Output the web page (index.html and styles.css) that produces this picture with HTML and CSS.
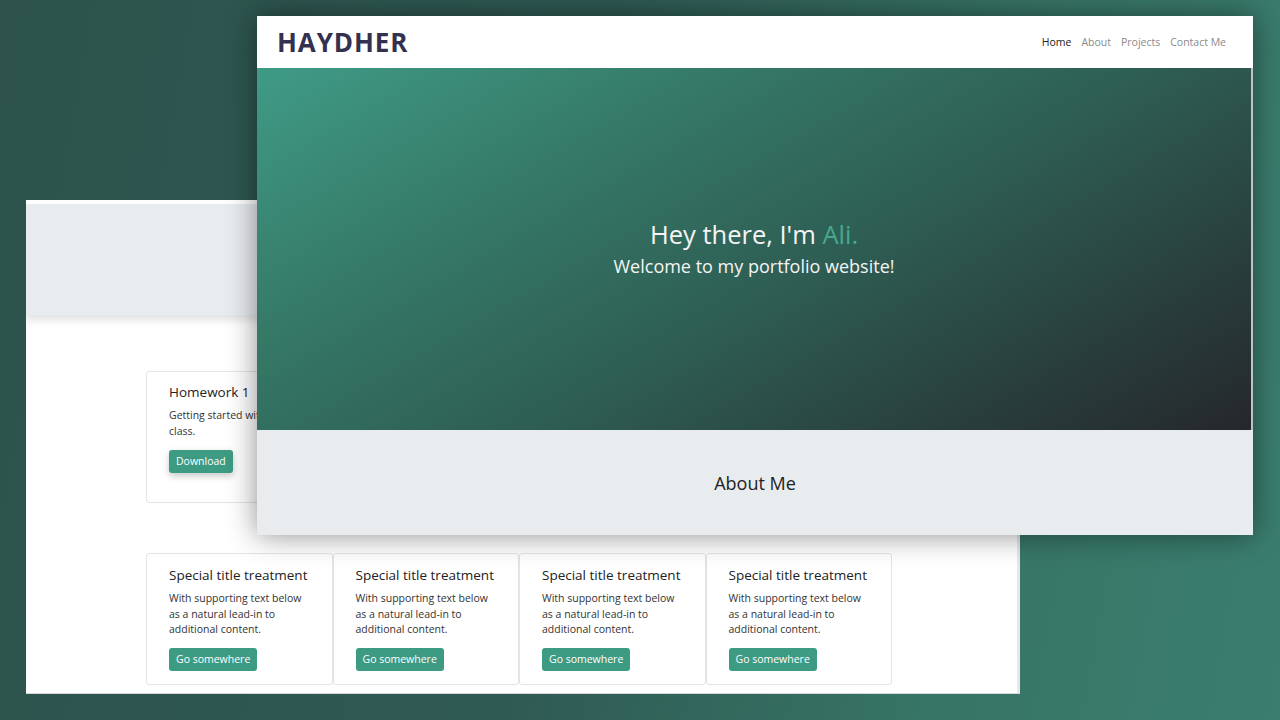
FILE: index.html
```html
<!DOCTYPE html>
<html lang="en">
<head>
<meta charset="utf-8">
<title>HAYDHER</title>
<link rel="stylesheet" href="styles.css">
</head>
<body>
<div class="desktop">
  <section class="window back">
    <div class="back-top"></div>
    <div class="jumbo"></div>
    <div class="back-content">
      <div class="hw-row">
        <div class="card hw-card">
          <h5 class="card-title">Homework 1</h5>
          <p class="card-text">Getting started with the basics of this<br>class.</p>
          <a class="btn btn-shadow">Download</a>
        </div>
      </div>
      <h3 class="section-head">Weekly Activity</h3>
      <div class="card-row">
        <div class="card">
          <h5 class="card-title">Special title treatment</h5>
          <p class="card-text">With supporting text below as a natural lead-in to additional content.</p>
          <a class="btn">Go somewhere</a>
        </div>
        <div class="card">
          <h5 class="card-title">Special title treatment</h5>
          <p class="card-text">With supporting text below as a natural lead-in to additional content.</p>
          <a class="btn">Go somewhere</a>
        </div>
        <div class="card">
          <h5 class="card-title">Special title treatment</h5>
          <p class="card-text">With supporting text below as a natural lead-in to additional content.</p>
          <a class="btn">Go somewhere</a>
        </div>
        <div class="card">
          <h5 class="card-title">Special title treatment</h5>
          <p class="card-text">With supporting text below as a natural lead-in to additional content.</p>
          <a class="btn">Go somewhere</a>
        </div>
      </div>
    </div>
    <div class="scrollbar"></div>
  </section>

  <section class="window front">
    <nav class="navbar">
      <div class="brand">HAYDHER</div>
      <ul class="nav">
        <li class="active">Home</li>
        <li>About</li>
        <li>Projects</li>
        <li>Contact Me</li>
      </ul>
    </nav>
    <header class="hero">
      <h1 class="hero-title">Hey there, I'm <span class="accent">Ali.</span></h1>
      <p class="hero-sub">Welcome to my portfolio website!</p>
    </header>
    <section class="about">
      <h2 class="about-title">About Me</h2>
    </section>
  </section>
</div>
</body>
</html>
```

FILE: styles.css
```css
* { box-sizing: border-box; }
html, body { margin: 0; padding: 0; }
body {
  width: 1280px;
  height: 720px;
  overflow: hidden;
  font-family: "Open Sans", "Noto Sans", sans-serif;
}
.desktop {
  position: relative;
  width: 1280px;
  height: 720px;
  background: linear-gradient(100deg, #2d524c 0%, #2f5a53 45%, #377566 75%, #3a7e6f 100%);
}
.window { position: absolute; overflow: hidden; }

/* back window */
.back {
  left: 26px;
  top: 200px;
  width: 994px;
  height: 494px;
  background: #fff;
  border-bottom: 1px solid #d8d8d8;
}
.back-top { height: 4px; background: #fff; }
.jumbo {
  height: 111px;
  background: #e9ecef;
  box-shadow: 0 5px 8px rgba(0,0,0,0.12);
  position: relative;
}
.back-content {
  padding: 56px 0 0 120px;
  display: flex;
  flex-direction: column;
}
.hw-row { display: flex; }
.card {
  border: 1px solid #e3e4e6;
  border-radius: 3px;
  background: #fff;
  padding: 12px 22px 13px 22px;
  display: flex;
  flex-direction: column;
  align-items: flex-start;
}
.hw-card { width: 300px; height: 132px; padding-top: 11px; }
.card-title {
  margin: 0 0 7px;
  font-weight: 400;
  font-size: 13.5px;
  color: #222;
  line-height: 18px;
}
.card-text {
  margin: 0 0 10px;
  font-size: 10.5px;
  line-height: 15.5px;
  color: #333;
}
.hw-card .card-text { margin-bottom: 11px; }
.btn {
  display: inline-block;
  background: #3d9a83;
  color: #fff;
  font-size: 10.5px;
  line-height: 23px;
  height: 23px;
  padding: 0 7px;
  border-radius: 3px;
}
.btn-shadow { box-shadow: 0 3px 7px rgba(0,0,0,0.22); }
.section-head {
  margin: 9px 0 0;
  text-align: center;
  width: 754px;
  font-weight: 400;
  font-size: 16px;
  line-height: 18px;
  color: #222;
  padding-left: 60px;
}
.card-row {
  display: flex;
  margin-top: 23px;
}
.card-row .card { width: 186.5px; height: 132px; }
.scrollbar {
  position: absolute;
  right: 0;
  top: 0;
  width: 3px;
  height: 100%;
  background: #e8e8e8;
}

/* front window */
.front {
  left: 257px;
  top: 16px;
  width: 996px;
  height: 519px;
  background: #fff;
  box-shadow: 0 0 28px rgba(0,0,0,0.45);
  display: flex;
  flex-direction: column;
}
.navbar {
  height: 52px;
  display: flex;
  align-items: center;
  justify-content: space-between;
  padding: 0 27px 0 20px;
  background: #fff;
}
.brand {
  font-weight: 700;
  font-size: 26px;
  letter-spacing: 0.9px;
  color: #33314f;
}
.nav {
  list-style: none;
  margin: 0;
  padding: 0;
  display: flex;
  gap: 10px;
  font-size: 10.5px;
  color: #8a8a8a;
}
.nav .active { color: #222; }
.hero {
  height: 362px;
  background: linear-gradient(150deg, #3f9b86 0%, #357866 30%, #2e5e54 55%, #25272b 100%);
  display: flex;
  flex-direction: column;
  align-items: center;
  justify-content: center;
  color: #f4f4f4;
  border-right: 2px solid #bfc3c6;
  padding-bottom: 1px;
}
.hero-title {
  margin: 0;
  font-weight: 400;
  font-size: 25.5px;
  line-height: 30px;
}
.accent { color: #46aa8f; }
.hero-sub {
  margin: 5px 0 0;
  font-size: 18px;
  line-height: 24px;
}
.about {
  flex: 1;
  background: #e9ecef;
  display: flex;
  justify-content: center;
  padding-top: 42px;
}
.about-title {
  margin: 0;
  font-weight: 400;
  font-size: 18px;
  line-height: 22px;
  color: #222;
}
```
